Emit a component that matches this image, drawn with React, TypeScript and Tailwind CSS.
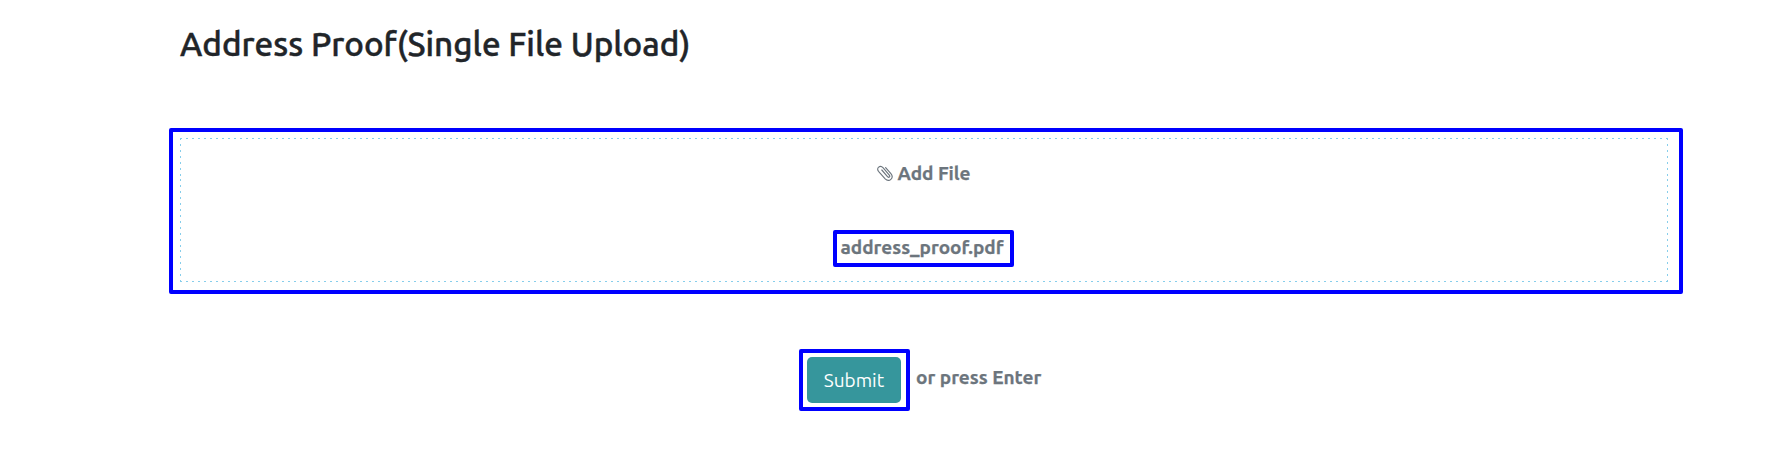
const dashes =
  "bg-[repeating-linear-gradient(90deg,#87ceeb_0_2px,transparent_2px_5.992px),repeating-linear-gradient(90deg,#87ceeb_0_2px,transparent_2px_5.992px),repeating-linear-gradient(180deg,#87ceeb_0_2px,transparent_2px_5.917px),repeating-linear-gradient(180deg,#87ceeb_0_2px,transparent_2px_5.917px)] bg-[length:100%_1px,100%_1px,1px_100%,1px_100%] bg-[position:0_0,0_100%,0_0,100%_0] bg-no-repeat";

function PaperclipIcon() {
  return (
    <svg viewBox="0 0 16 16" className="mr-px h-4 w-4 shrink-0" fill="none" stroke="#6c757d" strokeWidth="1.15" strokeLinecap="round" strokeLinejoin="round">
      <path d="M4.800 5 10.700 11.800c1.400 1.200 2.800-.2 1.600-1.700L6.200 2.900C3-.4-1.100 3.100 1.500 6.300l6.700 7.500c4 3.900 9.200-.8 5.700-5.100L8.600 2.600" />
    </svg>
  );
}

export default function App() {
  return (
    <main className="h-[465px] w-full bg-white font-['Ubuntu','Noto_Sans',sans-serif] text-[19px] font-bold text-[#6c757d] [-webkit-text-stroke:0.25px_currentColor]">
      <h1 className="ml-[180px] flex h-[128px] items-start pt-[22px] text-[33.25px] leading-[44px] font-medium whitespace-nowrap text-[#212529] [-webkit-text-stroke:0.45px_#212529]">
        Address Proof(Single File Upload)
      </h1>
      <section className="ml-[169px] h-[166px] w-[1514px] rounded-[2px] border-4 border-[#0000ff] pt-[6px] pl-[7px]">
        <div className={`flex h-[144px] w-[1488px] flex-col items-center ${dashes}`}>
          <div className="mt-[23px] flex h-6 items-center gap-[3px] leading-6 whitespace-nowrap">
            <PaperclipIcon />
            <span>Add File</span>
          </div>
          <div className="mt-[45px] mr-[2px] flex h-[37px] w-[181px] items-start rounded-[2px] border-4 border-[#0000ff] pl-1 leading-[26px] whitespace-nowrap">
            <span>address_proof.pdf</span>
          </div>
        </div>
      </section>
      <div className="mt-[55px] ml-[799px] flex items-start">
        <div className="h-[62px] w-[111px] rounded-[2px] border-4 border-[#0000ff] p-1">
          <button className="h-[46px] w-[94px] rounded-[5px] bg-[#36969c] text-center font-normal text-white [-webkit-text-stroke:0]">Submit</button>
        </div>
        <span className="mt-4 ml-[6px] leading-6 whitespace-nowrap">or press Enter</span>
      </div>
    </main>
  );
}
